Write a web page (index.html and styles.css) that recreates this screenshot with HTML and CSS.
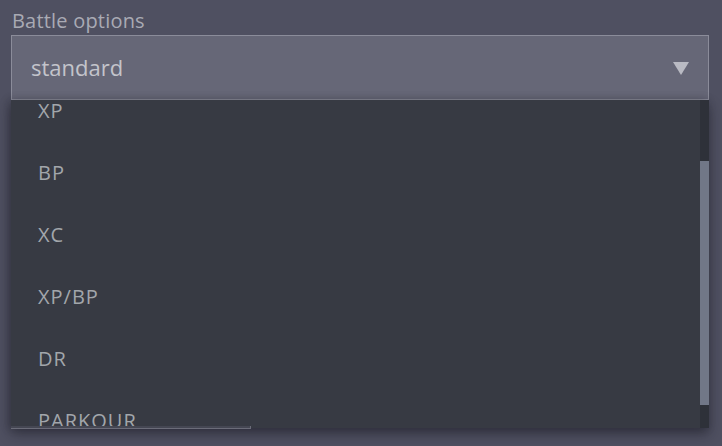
FILE: index.html
```html
<!DOCTYPE html>
<html>
<head>
<meta charset="utf-8">
<link rel="stylesheet" href="styles.css">
</head>
<body>
<div class="field">
  <div class="label">Battle options</div>
  <div class="select">
    <span class="value">standard</span>
    <span class="arrow"></span>
  </div>
  <div class="under-line"></div>
  <div class="menu">
    <div class="menu-viewport">
      <ul class="options">
        <li>standard</li>
        <li>XP</li>
        <li>BP</li>
        <li>XC</li>
        <li>XP/BP</li>
        <li>DR</li>
        <li>PARKOUR</li>
      </ul>
    </div>
    <div class="track"><div class="thumb"></div></div>
  </div>
</div>
</body>
</html>
```
FILE: styles.css
```css
html, body {
  margin: 0;
  padding: 0;
  background: #4f5061;
  height: 100%;
  overflow: hidden;
}
body {
  font-family: "Open Sans", "Liberation Sans", sans-serif;
}
.field {
  position: relative;
  padding: 6px 13px 0 11px;
}
.label {
  color: #a9aab4;
  font-size: 20px;
  letter-spacing: 0.2px;
  line-height: 29px;
  padding-left: 1px;
}
.select {
  box-sizing: border-box;
  height: 65px;
  background: #666777;
  border: 1px solid #8b8c9a;
  display: flex;
  align-items: center;
  justify-content: space-between;
  padding: 0 19px 0 19px;
}
.value {
  color: #c3c4cb;
  font-size: 22px;
  padding-bottom: 2px;
}
.arrow {
  width: 0;
  height: 0;
  border-left: 8px solid transparent;
  border-right: 8px solid transparent;
  border-top: 13px solid #b9bac3;
  margin-top: 1px;
}
.under-line {
  position: absolute;
  left: 11px;
  top: 426px;
  width: 239px;
  height: 2px;
  background: #454753;
  border-bottom: 1px solid #6b6c79;
  border-right: 1px solid #6b6c79;
  z-index: 2;
}
.menu {
  position: absolute;
  left: 11px;
  top: 100px;
  width: 698px;
  height: 328px;
  display: flex;
  background: #373a43;
  box-shadow: 0 6px 12px rgba(20, 20, 28, 0.45), -2px 0 8px rgba(20, 20, 28, 0.25);
}
.menu-viewport {
  flex: 1;
  overflow: hidden;
}
.options {
  list-style: none;
  margin: -82px 0 0 0;
  padding: 0;
}
.options li {
  height: 62px;
  line-height: 62px;
  padding-left: 27px;
  color: #a2a6ab;
  font-size: 20px;
  letter-spacing: 1px;
}
.track {
  width: 9px;
  background: #2e3139;
  display: flex;
  flex-direction: column;
}
.thumb {
  margin-top: 61px;
  height: 244px;
  background: #717787;
}
```
